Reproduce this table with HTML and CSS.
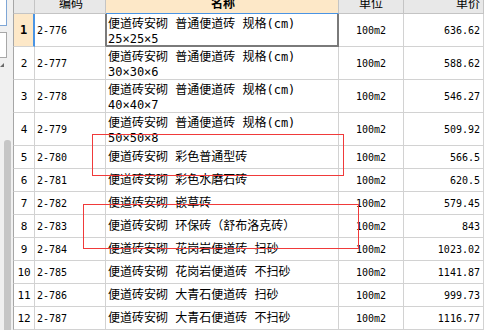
FILE: index.html
```html
<!DOCTYPE html>
<html lang="zh-CN">
<head>
<meta charset="utf-8">
<title>定额列表</title>
<link rel="stylesheet" href="styles.css">
</head>
<body>
<div class="app">
  <div class="side">
    <div class="side-top"></div>
    <div class="side-box"></div>
    <div class="side-tri"></div>
    <div class="side-thumb"></div>
  </div>
  <div class="sheet">
    <div class="row head">
      <div class="c rn h"></div>
      <div class="c code h"><span>编码</span></div>
      <div class="c name h sel-col"><span>名称</span></div>
      <div class="c unit h"><span>单位</span></div>
      <div class="c price h"><span>单价</span></div>
    </div>
    <div class="row tall">
      <div class="c rn sel-row">1</div>
      <div class="c code sel-left">2-776</div>
      <div class="c name two sel">便道砖安砌 普通便道砖 规格(cm)<br>25×25×5</div>
      <div class="c unit">100m2</div>
      <div class="c price">636.62</div>
    </div>
    <div class="row tall">
      <div class="c rn">2</div>
      <div class="c code">2-777</div>
      <div class="c name two">便道砖安砌 普通便道砖 规格(cm)<br>30×30×6</div>
      <div class="c unit">100m2</div>
      <div class="c price">588.62</div>
    </div>
    <div class="row tall">
      <div class="c rn">3</div>
      <div class="c code">2-778</div>
      <div class="c name two">便道砖安砌 普通便道砖 规格(cm)<br>40×40×7</div>
      <div class="c unit">100m2</div>
      <div class="c price">546.27</div>
    </div>
    <div class="row tall">
      <div class="c rn">4</div>
      <div class="c code">2-779</div>
      <div class="c name two">便道砖安砌 普通便道砖 规格(cm)<br>50×50×8</div>
      <div class="c unit">100m2</div>
      <div class="c price">509.92</div>
    </div>
    <div class="row">
      <div class="c rn">5</div>
      <div class="c code">2-780</div>
      <div class="c name">便道砖安砌 彩色普通型砖</div>
      <div class="c unit">100m2</div>
      <div class="c price">566.5</div>
    </div>
    <div class="row">
      <div class="c rn">6</div>
      <div class="c code">2-781</div>
      <div class="c name">便道砖安砌 彩色水磨石砖</div>
      <div class="c unit">100m2</div>
      <div class="c price">620.5</div>
    </div>
    <div class="row">
      <div class="c rn">7</div>
      <div class="c code">2-782</div>
      <div class="c name">便道砖安砌 嵌草砖</div>
      <div class="c unit">100m2</div>
      <div class="c price">579.45</div>
    </div>
    <div class="row">
      <div class="c rn">8</div>
      <div class="c code">2-783</div>
      <div class="c name">便道砖安砌 环保砖（舒布洛克砖）</div>
      <div class="c unit">100m2</div>
      <div class="c price">843</div>
    </div>
    <div class="row">
      <div class="c rn">9</div>
      <div class="c code">2-784</div>
      <div class="c name">便道砖安砌 花岗岩便道砖 扫砂</div>
      <div class="c unit">100m2</div>
      <div class="c price">1023.02</div>
    </div>
    <div class="row">
      <div class="c rn">10</div>
      <div class="c code">2-785</div>
      <div class="c name">便道砖安砌 花岗岩便道砖 不扫砂</div>
      <div class="c unit">100m2</div>
      <div class="c price">1141.87</div>
    </div>
    <div class="row">
      <div class="c rn">11</div>
      <div class="c code">2-786</div>
      <div class="c name">便道砖安砌 大青石便道砖 扫砂</div>
      <div class="c unit">100m2</div>
      <div class="c price">999.73</div>
    </div>
    <div class="row">
      <div class="c rn">12</div>
      <div class="c code">2-787</div>
      <div class="c name">便道砖安砌 大青石便道砖 不扫砂</div>
      <div class="c unit">100m2</div>
      <div class="c price">1116.77</div>
    </div>
  </div>
  <div class="mark mark-a"></div>
  <div class="mark mark-b"></div>
</div>
</body>
</html>
```
FILE: styles.css
```css
html, body {
  margin: 0;
  padding: 0;
  background: #ffffff;
}

.app {
  position: relative;
  display: flex;
  width: 490px;
  height: 330px;
  overflow: hidden;
  background: #ffffff;
  font-family: "DejaVu Sans Mono", "Noto Sans CJK SC", monospace;
  color: #000000;
}

/* left strip */
.side {
  width: 13px;
  flex: none;
  display: flex;
  flex-direction: column;
  background: #f0f0f0;
}
.side-top {
  width: 6px;
  height: 25px;
  background: #ffffff;
  border-right: 1px solid #7ea6d6;
  border-bottom: 1px solid #7ea6d6;
}
.side-box {
  width: 6px;
  height: 24px;
  margin-top: 6px;
  background: #ffffff;
  border: 1px solid #a8a8a8;
  border-left: none;
}
.side-tri {
  width: 0;
  height: 0;
  margin-top: 5px;
  border-left: 4px solid transparent;
  border-bottom: 4px solid #6a6a6a;
}
.side-thumb {
  width: 7px;
  margin-left: 4px;
  margin-top: 73px;
  flex: 1;
  background: #c6c6c6;
  border-radius: 3px 3px 0 0;
}

/* sheet */
.sheet {
  display: grid;
  grid-template-columns: 22px 71px 233px 65px 80px;
  grid-template-rows: 14px repeat(4, 33px) repeat(8, 23px);
  align-content: start;
}
.row {
  display: contents;
}
.c {
  box-sizing: border-box;
  border-right: 1px solid #d2d2d2;
  border-bottom: 1px solid #d2d2d2;
  display: flex;
  align-items: center;
  overflow: hidden;
  white-space: nowrap;
  font-size: 10px;
  line-height: 15px;
}

.h {
  background: #e8e8e8;
  border-bottom-color: #c4c4c4;
  border-right-color: #c4c4c4;
  align-items: flex-start;
  justify-content: center;
  font-family: "Noto Sans CJK SC", sans-serif;
  font-size: 12px;
}
.h span {
  margin-top: -5px;
}
.h.sel-col {
  background: #fde8c8;
  border-bottom-color: #4a94e4;
  font-weight: bold;
}

.rn {
  border-left: 1px solid #a6a6a6;
  justify-content: center;
  font-size: 11px;
}
.rn.sel-row {
  background: #fde8c8;
  border-right: 2px solid #4a94e4;
  font-weight: bold;
  font-size: 12px;
}

.code {
  padding-left: 2px;
}
.code.sel-left {
  border-right-color: #7a7a7a;
}

.name {
  padding-left: 2px;
  font-size: 12px;
}
.name.two {
  display: block;
  padding-top: 3px;
}
.name.sel {
  border-right: 2px solid #7a7a7a;
  border-bottom: 2px solid #7a7a7a;
  border-left: 1px solid #7a7a7a;
  padding-left: 1px;
}

.unit {
  justify-content: center;
}
.price {
  justify-content: flex-end;
  padding-right: 3px;
}

/* red annotation frames drawn over the sheet */
.mark {
  position: absolute;
  box-sizing: border-box;
  border: 1px solid #f03a3a;
  pointer-events: none;
}
.mark-a {
  left: 92px;
  top: 134px;
  width: 252px;
  height: 42px;
}
.mark-b {
  left: 83px;
  top: 204px;
  width: 276px;
  height: 45px;
}
```
